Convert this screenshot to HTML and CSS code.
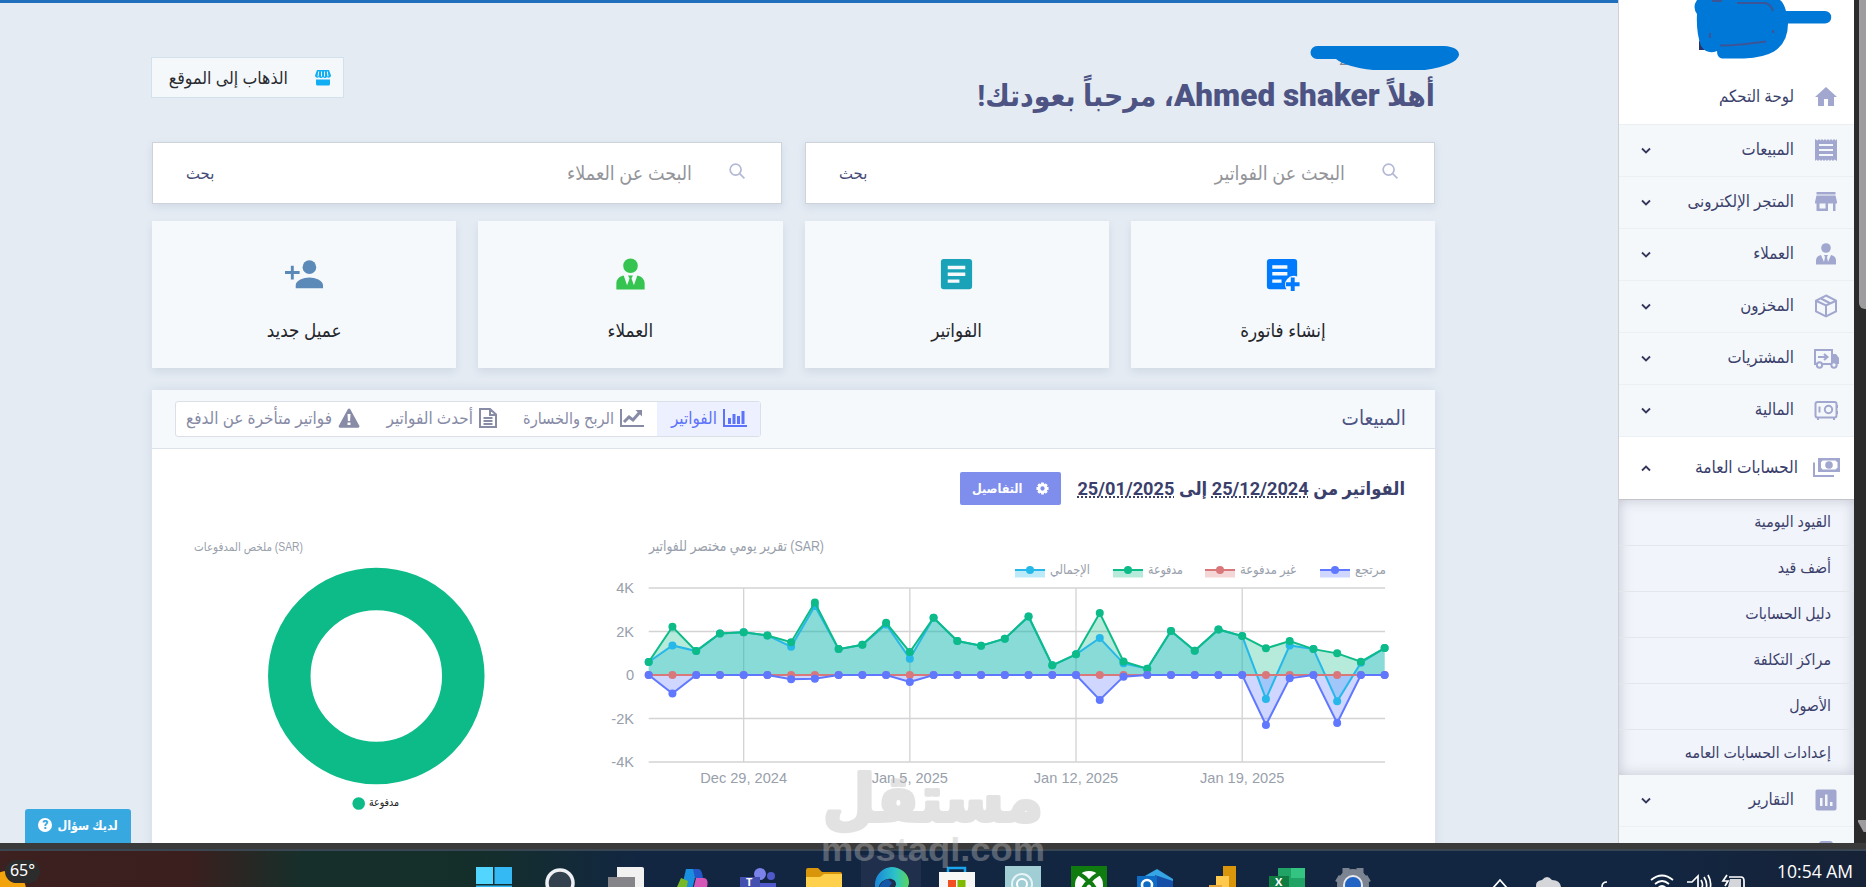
FILE: index.html
```html
<!DOCTYPE html>
<html lang="ar">
<head>
  <meta charset="UTF-8" />
  <meta name="viewport" content="width=device-width, initial-scale=1.0"/>
  <title>لوحة التحكم</title>
  <link rel="stylesheet" href="styles.css">
</head>
<body>

  <div class="window" dir="rtl">
    <div class="scrollbar"><span class="thumb"></span><span class="arrow"></span></div>

    <!-- Sidebar -->
    <nav class="sidebar">
      <a class="item home">
        <svg class="icon" viewBox="0 0 24 24"><path d="M10 21v-7h4v7h6v-9h3L12 2 1 12h3v9z"/></svg>
        <span>لوحة التحكم</span>
      </a>
      <a class="item">
        <svg class="icon" viewBox="0 0 24 24"><path fill-rule="evenodd" d="M19 18H5v-2h14v2zm0-5H5v-2h14v2zm0-5H5V6h14v2zM1 23l1.500-1.500L4 23l1.500-1.500L7 23l1.500-1.500L10 23l1.500-1.500L13 23l1.500-1.500L16 23l1.500-1.500L19 23l1.500-1.500L23 23V1l-1.500 1.500L20 1l-1.500 1.500L17 1l-1.500 1.500L14 1l-1.500 1.500L11 1 9.500 2.500 8 1 6.500 2.500 5 1 3.500 2.500 1 1z"/></svg>
        <span>المبيعات</span>
        <svg class="chev" viewBox="0 0 12 8"><path d="M2 1.500l4 4 4-4"/></svg>
      </a>
      <a class="item">
        <svg class="icon" viewBox="0 0 24 24"><path fill-rule="evenodd" d="M2.500 2h19v2.500h-19zM21.500 5.500h-19L1 12v1.500h1.500V21H14v-7.500h5V21h2.500v-7.500H23V12zM11.500 18.500h-6v-5h6z"/></svg>
        <span>المتجر الإلكترونى</span>
        <svg class="chev" viewBox="0 0 12 8"><path d="M2 1.500l4 4 4-4"/></svg>
      </a>
      <a class="item">
        <svg class="icon" viewBox="0 0 24 24"><circle cx="12" cy="6" r="4.800"/><path d="M2 22.500v-4c0-3 2-5 5-5.500L10 20l1-5-1-2h4l-1 2 1 5 3-7c3 .5 5 2.500 5 5.500v4z"/></svg>
        <span>العملاء</span>
        <svg class="chev" viewBox="0 0 12 8"><path d="M2 1.500l4 4 4-4"/></svg>
      </a>
      <a class="item">
        <svg class="icon line" viewBox="0 0 24 24"><path d="M12 1.500l10 5v11l-10 5-10-5v-11zM2.500 7L12 11.500 21.500 7M12 11.500V22M7 4.500l9.500 5"/></svg>
        <span>المخزون</span>
        <svg class="chev" viewBox="0 0 12 8"><path d="M2 1.500l4 4 4-4"/></svg>
      </a>
      <a class="item">
        <svg class="icon wide line" viewBox="0 0 27 24"><path d="M4 18H2V4h17v14H9M5 11h8M11 8l3.500 3L11 14M19 18h1"/><path class="solid" d="M19 8h4l3 4v6h-7z"/><circle class="hole" cx="6.500" cy="19" r="2.700"/><circle class="hole" cx="21" cy="19" r="2.700"/></svg>
        <span>المشتريات</span>
        <svg class="chev" viewBox="0 0 12 8"><path d="M2 1.500l4 4 4-4"/></svg>
      </a>
      <a class="item">
        <svg class="icon line" viewBox="0 0 24 24"><rect x="1.500" y="4" width="21" height="15.500" rx="2"/><circle cx="14.500" cy="11.500" r="3.700"/><path d="M5.500 8.500v6M4 20v2M20 20v2M23.500 7v3M23.500 13v3"/></svg>
        <span>المالية</span>
        <svg class="chev" viewBox="0 0 12 8"><path d="M2 1.500l4 4 4-4"/></svg>
      </a>
      <a class="item open">
        <svg class="icon wide" viewBox="0 0 27 24"><path fill-rule="evenodd" d="M5 3h22v14H5zM9.500 5.500A3 3 0 0 1 8 7v6a3 3 0 0 1 1.500 1.500h13A3 3 0 0 1 24.500 13V7a3 3 0 0 1-2-1.500z"/><circle cx="16" cy="10" r="3.800"/><path d="M0 7.500h2V20h19v2H0z"/></svg>
        <span>الحسابات العامة</span>
        <svg class="chev" viewBox="0 0 12 8"><path d="M2 6.500l4-4 4 4"/></svg>
      </a>
      <div class="submenu">
        <a>القيود اليومية</a>
        <a>أضف قيد</a>
        <a>دليل الحسابات</a>
        <a>مراكز التكلفة</a>
        <a>الأصول</a>
        <a>إعدادات الحسابات العامه</a>
      </div>
      <a class="item">
        <svg class="icon" viewBox="0 0 24 24"><path fill-rule="evenodd" d="M3.500 1.500h17a2 2 0 0 1 2 2v17a2 2 0 0 1-2 2h-17a2 2 0 0 1-2-2v-17a2 2 0 0 1 2-2zM6 10v8h2.500v-8zM11 6.500V18h2.500V6.500zM16 14v4h2.500v-4z"/></svg>
        <span>التقارير</span>
        <svg class="chev" viewBox="0 0 12 8"><path d="M2 1.500l4 4 4-4"/></svg>
      </a>
      <a class="item">
        <svg class="icon" viewBox="0 0 24 24"><rect x="5" y="1" width="14" height="20" rx="3"/></svg>
      </a>
    </nav>

    <!-- Main content -->
    <main class="main">
      <header class="header">
        <div class="welcome">
          <small>2024</small>
          <h1>أهلاً <b>Ahmed shaker</b>، مرحباً بعودتك!</h1>
        </div>
        <a class="site-btn">
          <svg viewBox="0 0 18 18"><path d="M3 1h12l2 5.500a2.300 2.300 0 0 1-4 1.500 2.500 2.500 0 0 1-4 0 2.500 2.500 0 0 1-4 0 2.300 2.300 0 0 1-4-1.500zM2 10.500h14V15a1.500 1.500 0 0 1-1.500 1.500h-11A1.500 1.500 0 0 1 2 15z"/><path class="slits" d="M4.700 2.500l-.7 5M7.500 2.500v5M10.500 2.500v5M13.300 2.500l.7 5"/></svg>
          <span>الذهاب إلى الموقع</span>
        </a>
      </header>

      <div class="searches">
        <div class="search">
          <svg viewBox="0 0 18 18"><circle cx="7" cy="7" r="5.800"/><path d="M11.300 11.300l5 5"/></svg>
          <span class="placeholder">البحث عن الفواتير</span>
          <span class="go">بحث</span>
        </div>
        <div class="search">
          <svg viewBox="0 0 18 18"><circle cx="7" cy="7" r="5.800"/><path d="M11.300 11.300l5 5"/></svg>
          <span class="placeholder">البحث عن العملاء</span>
          <span class="go">بحث</span>
        </div>
      </div>

      <div class="cards">
        <a class="card blue">
          <svg viewBox="0 0 40 40"><path fill-rule="evenodd" d="M7 4h25a3 3 0 0 1 3 3v15a9 9 0 0 0-11 13H7a3 3 0 0 1-3-3V7a3 3 0 0 1 3-3zM9.500 10.500V14H25v-3.500zM9.500 17.500V21H25v-3.500zM9.500 25v3.500H19V25z"/><path d="M28.500 23h4v5h5v4h-5v5h-4v-5h-5v-4h5z"/></svg>
          <span>إنشاء فاتورة</span>
        </a>
        <a class="card teal">
          <svg viewBox="0 0 40 40"><path fill-rule="evenodd" d="M7 4h26a3 3 0 0 1 3 3v25a3 3 0 0 1-3 3H7a3 3 0 0 1-3-3V7a3 3 0 0 1 3-3zM11 11v3.500h18V11zM11 18v3.500h18V18zM11 25v3.500h12V25z"/></svg>
          <span>الفواتير</span>
        </a>
        <a class="card green">
          <svg viewBox="0 0 40 40"><circle cx="20" cy="11" r="7.500"/><path d="M5.500 35.500V29c0-4 3-7 7.500-8l3.500 10L19 24l-1.500-3h5L21 24l2.500 7L27 21c4.500 1 7.500 4 7.500 8v6.500z"/></svg>
          <span>العملاء</span>
        </a>
        <a class="card steel">
          <svg viewBox="0 0 40 40"><circle cx="25" cy="12.500" r="7"/><path d="M11 34v-3c0-5 8-8 14-8s14 3 14 8v3zM6 11h3v5.500h6v3H9V25H6v-5.500H0v-3h6z"/></svg>
          <span>عميل جديد</span>
        </a>
      </div>

      <section class="panel">
        <div class="panel-head">
          <h2>المبيعات</h2>
          <div class="tabs">
            <a class="tab active">
              <svg viewBox="0 0 24 20"><path class="stroke" d="M1 1v17h23"/><path d="M5 10h3v6H5zM9.500 6h3v10h-3zM14 8h3v8h-3zM18.500 3h3v13h-3z"/></svg>
              <span>الفواتير</span>
            </a>
            <a class="tab profit">
              <svg viewBox="0 0 24 20"><path class="stroke" d="M1 1v17h23"/><path class="stroke thick" d="M4 14l5-5 4 3 7-8"/><path d="M15.500 2H22v6.500z"/></svg>
              <span>الربح والخسارة</span>
            </a>
            <a class="tab latest">
              <svg class="doc" viewBox="0 0 18 20"><path class="stroke" d="M1 1h10l6 5.500V19H1zM11 1v6h6M4.500 10h9M4.500 13h9M4.500 16h9"/></svg>
              <span>أحدث الفواتير</span>
            </a>
            <a class="tab late">
              <svg class="warn" viewBox="0 0 22 20"><path fill-rule="evenodd" d="M11 .5a1.500 1.500 0 0 1 1.300.8l9 16.500a1.300 1.300 0 0 1-1.200 1.900H2a1.300 1.300 0 0 1-1.200-1.900l9-16.500A1.500 1.500 0 0 1 11 .5zM9.500 6l.4 7h2.200l.4-7zM9.500 14.500V17h3v-2.500z"/></svg>
              <span>فواتير متأخرة عن الدفع</span>
            </a>
          </div>
        </div>

        <div class="range">
          <h3>الفواتير من <u>25/12/2024</u> إلى <u>25/01/2025</u></h3>
          <a class="details">
            <svg viewBox="0 0 14 14"><circle cx="7" cy="7" r="3.800"/><path d="M7 .5v2.500M7 11v2.500M.5 7H3M11 7h2.500M2.400 2.400l1.800 1.800M9.800 9.800l1.800 1.800M2.400 11.600l1.800-1.800M9.800 4.200l1.800-1.800"/></svg>
            <span>التفاصيل</span>
          </a>
        </div>

        <div class="charts">
          <svg id="line-chart" width="800" height="270" viewBox="605 530 800 270">
            <text class="chart-title" x="649" y="551" textLength="175" lengthAdjust="spacingAndGlyphs">تقرير يومي مختصر للفواتير (SAR)</text>
          </svg>
          <svg id="donut" width="400" height="300" viewBox="180 530 400 300">
            <text class="chart-title small" x="194" y="551" textLength="109" lengthAdjust="spacingAndGlyphs">ملخص المدفوعات (SAR)</text>
            <circle class="ring" cx="376.300" cy="676" r="87"/>
            <circle class="dot" cx="358.700" cy="803.500" r="6.300"/>
            <text class="donut-label" x="369" y="806" textLength="30" lengthAdjust="spacingAndGlyphs">مدفوعة</text>
          </svg>
        </div>
      </section>

      <a class="help">
        <span>لديك سؤال</span><b>?</b>
      </a>
    </main>
  </div>

  <!-- Taskbar -->
  <footer class="taskbar">
    <div class="weather"><i></i><span>65°</span></div>
    <div class="apps">
      <svg viewBox="0 0 36 36"><path fill="#52d6ff" d="M0 0h17v17H0z"/><path fill="#35b9f5" d="M18.500 0H36v17H18.500zM0 18.500h36V36H0z"/></svg>
      <svg viewBox="0 0 36 36"><circle cx="18" cy="16" r="13" fill="#33414f" stroke="#eef0f3" stroke-width="3.500"/></svg>
      <svg viewBox="0 0 36 36"><path fill="#f1f1f1" d="M9 0h25a2 2 0 0 1 2 2v26H9z"/><path fill="#858489" d="M0 10h27v22H0z"/></svg>
      <svg viewBox="0 0 36 36"><path fill="#1a8fe0" d="M12 2h11l-7 30H5z"/><path fill="#78b928" d="M3 20l4-9 7 3-4 18H1z"/><path fill="#2356c8" d="M19 2h5c3 0 4 3 5 9h-8z"/><path fill="#d457b8" d="M22 11h8q5 1 3 9l-4 11H17z"/></svg>
      <svg viewBox="0 0 36 36"><circle cx="20" cy="7" r="6" fill="#7b83eb"/><circle cx="31" cy="9" r="4" fill="#5059c9"/><path fill="#5059c9" d="M10 16h26v20H10z"/><path fill="#4450b0" d="M0 10h20v20H0z"/><text x="6" y="19" fill="#fff" class="letter">T</text></svg>
      <svg viewBox="0 0 36 36"><path fill="#d9960b" d="M0 3a2 2 0 0 1 2-2h10l4 4h18a2 2 0 0 1 2 2v10H0z"/><path fill="#ffd04c" d="M0 10h14l4-3h18v28H0z"/></svg>
      <svg class="current" viewBox="0 0 36 36"><defs><linearGradient id="edge"><stop offset="0" stop-color="#1a86d9"/><stop offset=".6" stop-color="#2cc3c8"/><stop offset="1" stop-color="#5bd65b"/></linearGradient></defs><path fill="url(#edge)" d="M18 0c10 0 18 7 18 15 0 6-4 9-9 9-4 0-6-2-5-4 3-4-1-9-7-8-7 1-11 7-10 16A18 18 0 0 1 18 0z"/><path fill="#1557a8" d="M15 12C6 15 3 24 8 32l12 4c-6-7-8-12-1-20z"/></svg>
      <svg viewBox="0 0 36 36"><path fill="none" stroke="#1aa5ee" stroke-width="2.500" d="M9 6V1h17v5"/><path fill="#f6f6f6" d="M0 5h36v31H0z"/><path fill="#f25022" d="M9 13h8v8H9z"/><path fill="#7fba00" d="M18.500 13h8v8h-8z"/></svg>
      <svg viewBox="0 0 36 36"><path fill="#a1cdd5" d="M0-1h36v37H0z"/><circle cx="17" cy="17" r="10" fill="none" stroke="#e6f4f6" stroke-width="2"/><circle cx="17" cy="17" r="5" fill="none" stroke="#fff" stroke-width="2"/></svg>
      <svg viewBox="0 0 36 36"><path fill="#107c10" d="M0-1h36v37H0z"/><circle cx="18" cy="18" r="14" fill="#fff"/><path fill="none" stroke="#107c10" stroke-width="4" d="M7 6q7 4 11 9 4-5 11-9M18 14q-8 7-9 18M18 14q8 7 9 18"/></svg>
      <svg viewBox="0 0 36 36"><path fill="#35a5e6" d="M6 10L20 2l16 10v22H6z"/><path fill="#164fa8" d="M18 8l18 6v20H18z"/><path fill="#0f6cc4" d="M0 9h20v20H0z"/><circle cx="10" cy="18" r="5" fill="none" stroke="#fff" stroke-width="2.500"/></svg>
      <svg viewBox="0 0 36 36"><path fill="#d9960b" d="M20-1h13v37H20z"/><path fill="#ffc94d" d="M13 9h13v27H13z"/><path fill="#e8a73c" d="M6 18h13v18H6z"/></svg>
      <svg viewBox="0 0 36 36"><path fill="#21a366" d="M9 1h27v33H9z"/><path fill="#33c481" d="M22 1h14v10H22z"/><path fill="#107c41" d="M0 9h20v20H0z"/><text x="6" y="19" fill="#fff" class="letter">X</text></svg>
      <svg viewBox="0 0 36 36"><circle cx="18" cy="18" r="12.500" fill="#2264c4" stroke="#7b8490" stroke-width="7"/><path d="M11 1v6M25 1v6M2 11l5 3M34 11l-5 3" stroke="#7b8490" stroke-width="7"/><circle cx="18" cy="18" r="9" fill="#2264c4" stroke="#e9e9ed" stroke-width="2"/></svg>
    </div>
    <div class="tray">
      <svg width="250" height="20" viewBox="1490 868 250 20"><path d="M1493 889l7-8 7 8"/><path class="cloud" d="M1536 888q-1-6 6-7 5-6 10 0 8 0 9 7z"/><path d="M1607 883q-5 0-5 5"/><path d="M1651 881q11-9 22 0M1655 885q7-6 14 0M1658 889q4-4 8 0"/><path d="M1687 883h5l6-6v14M1701 881q3 5 0 9M1704 878q4 6 2 12M1708 876q4 7 2 14"/><path class="cloud" d="M1730 880h11v8h-13z"/><path d="M1727 876l-4 6h5l-3 5M1729 878h12q3 0 3 4v6"/></svg>
      <time>10:54 AM</time>
    </div>
  </footer>

  <!-- Marker strokes and watermark lie over the whole screen -->
  <svg class="overlay" viewBox="0 0 1866 887">
    <path fill="#2b3468" d="M1699 40v10h6z"/>
    <path fill="#0078d8" d="M1697 0q-5 7 0 14-1 18 4 32 6 9 16 5 0 7 5 7.500h22q20-1 30-7 14-9 14-28h37a6 6 0 0 0 0-12.500h-39q-2-8-6-11z"/>
    <path class="scrap" d="M1720 45.500q12 0 21-1t25-3M1710 33v5M1773 30v3M1773 11q-2-7-8-8h-28M1712 1h10"/>
    <path fill="#0078d8" d="M1317 46h127q15 1 15 9-2 10-34 15h-52q-27-3-37-11h-19a6.500 6.500 0 0 1 0-13z"/>
    <g class="watermark">
      <text class="wm-ar" x="823" y="821" textLength="220" lengthAdjust="spacingAndGlyphs">مستقل</text>
      <text class="wm-en" x="821" y="861" textLength="224" lengthAdjust="spacingAndGlyphs">mostaql.com</text>
    </g>
  </svg>

  <script src="chart.js"></script>
</body>
</html>
```

FILE: styles.css
```css
* {
  box-sizing: border-box;
  margin: 0;
  padding: 0;
}

body {
  width: 1866px;
  height: 887px;
  overflow: hidden;
  position: relative;
  background: #3a3a3a;
  font-family: Roboto, "DejaVu Sans Condensed", "DejaVu Sans", sans-serif;
  color: #3b3f6b;
}

.window {
  display: flex;
  height: 843px;
  overflow: hidden;
}

.scrollbar {
  width: 12px;
  background: #2b2b2b;
  display: flex;
  flex-direction: column;
  justify-content: space-between;
  align-items: flex-end;
}

.thumb {
  width: 7px;
  height: 309px;
  background: #9f9c9f;
  border-radius: 0 0 0 6px;
  align-self: flex-start;
}

.arrow {
  width: 8px;
  height: 12px;
  margin-bottom: 11px;
  background: #9f9c9f;
  align-self: flex-start;
  clip-path: polygon(100% 0, 100% 100%, 70% 100%, 0 15%, 0 0);
}

/* Sidebar */
.sidebar {
  width: 236px;
  border-left: 1px solid #cfd1d5;
  background: #f4f8fb;
  flex: none;
}

.item {
  display: flex;
  align-items: center;
  height: 52px;
  padding: 0 16px 0 21px;
  border-bottom: 1px solid #edf0f2;
  font-size: 16.7px;
}

.item span {
  margin-bottom: 3px;
}

.item.home {
  height: 125px;
  padding-top: 71px;
  background: #fff;
}

.item.open {
  height: 63px;
  background: #fff;
  border-bottom: 1px solid #c5c3ca;
  font-size: 17.2px;
}

.icon {
  width: 24px;
  height: 24px;
  margin-left: 20px;
  margin-bottom: 2px;
  fill: #a1a7ce;
  flex: none;
}

.icon.wide {
  width: 27px;
  margin-right: -2px;
  margin-left: 19px;
}

.item.open .icon {
  margin-left: 15px;
}

.icon.line {
  fill: none;
  stroke: #a1a7ce;
  stroke-width: 2;
}

.icon .solid {
  fill: #a1a7ce;
  stroke: none;
}

.icon .hole {
  fill: #f4f8fb;
}

.chev {
  width: 12px;
  height: 8px;
  margin-right: auto;
  fill: none;
  stroke: #34375b;
  stroke-width: 1.8;
}

.submenu {
  height: 275px;
  background: #f1f4fa;
  box-shadow: inset 0 0 13px rgba(60, 65, 90, 0.25);
}

.submenu a {
  display: flex;
  align-items: center;
  height: 46px;
  padding-right: 23px;
  padding-bottom: 2px;
  border-bottom: 1px solid #e3e6eb;
  font-size: 15.8px;
}

.submenu a:last-child {
  border-bottom: 0;
}

/* Main */
.main {
  flex: 1;
  position: relative;
  background: #e4ebf3;
  border-top: 3px solid #1f6fbd;
  padding: 0 183px 0 152px;
}

.header {
  display: flex;
  justify-content: space-between;
  height: 139px;
}

.welcome {
  padding-top: 47px;
}

.welcome small {
  display: block;
  height: 22px;
  padding-right: 60px;
  font-size: 16px;
  color: #858894;
}

.welcome h1 {
  font-size: 29.7px;
  line-height: 48px;
  color: #4d5382;
  white-space: nowrap;
}

.welcome h1 b {
  font-size: 31.5px;
}

.site-btn {
  display: flex;
  align-items: center;
  gap: 26px;
  width: 193px;
  height: 41px;
  margin-top: 54px;
  margin-left: -1px;
  padding-right: 11px;
  background: #f4f8fb;
  border: 1px solid #d2e2ec;
  font-size: 17.6px;
  font-weight: 300;
  color: #292b30;
  white-space: nowrap;
}

.site-btn svg {
  width: 18px;
  height: 18px;
  fill: #11aef4;
}

.slits {
  stroke: #f4f8fb;
  stroke-width: 1;
}

.searches {
  display: flex;
  gap: 23px;
}

.search {
  flex: 1;
  display: flex;
  align-items: center;
  height: 62px;
  padding: 0 35px 0 33px;
  background: #fff;
  border: 1px solid #ced3d9;
  box-shadow: 0 3px 8px rgba(70, 90, 130, 0.12);
}

.search svg {
  width: 17px;
  height: 17px;
  margin-left: 37px;
  margin-bottom: 3px;
  fill: none;
  stroke: #b3b9d5;
  stroke-width: 1.8;
}

.placeholder {
  font-size: 19.5px;
  font-weight: 300;
  color: #94959a;
}

.go {
  margin-right: auto;
  font-size: 16.5px;
  color: #454b78;
}

.cards {
  display: grid;
  grid-template-columns: repeat(4, 1fr);
  gap: 22px;
  margin-top: 17px;
}

.card {
  display: flex;
  flex-direction: column;
  align-items: center;
  height: 147px;
  padding-top: 34px;
  background: #f5f9fc;
  box-shadow: 0 4px 8px rgba(50, 70, 100, 0.1);
  color: #24262b;
  font-size: 18.7px;
  font-weight: 300;
}

.card svg {
  width: 39px;
  height: 39px;
  margin-bottom: 26px;
}

.blue svg { fill: #007bff; }
.teal svg { fill: #19a2b8; }
.green svg { fill: #34c44f; }
.steel svg { fill: #5c8ab8; }

/* Sales panel */
.panel {
  height: 480px;
  margin-top: 22px;
  background: #fff;
  box-shadow: 0 0 10px rgba(70, 90, 130, 0.12);
}

.panel-head {
  display: flex;
  justify-content: space-between;
  align-items: flex-start;
  height: 59px;
  padding: 11px 29px 0 23px;
  background: #f5f9fc;
  border-bottom: 1px solid #dde3ea;
}

.panel-head h2 {
  font-size: 20.5px;
  line-height: 35px;
  font-weight: normal;
  color: #4d5382;
}

.tabs {
  display: flex;
  width: 586px;
  height: 36px;
  background: #fff;
  border: 1px solid #dbe0e8;
  border-radius: 3px;
}

.tab {
  display: flex;
  align-items: center;
  gap: 6px;
  padding-right: 13px;
  padding-bottom: 2px;
  font-size: 17px;
  color: #878ba6;
  fill: #878ba6;
  white-space: nowrap;
}

.tab svg {
  width: 24px;
  height: 20px;
  flex: none;
}

.tab svg.doc { width: 18px; }
.tab svg.warn { width: 22px; }

.tab .stroke {
  fill: none;
  stroke: #878ba6;
  stroke-width: 2;
}

.tab .thick {
  stroke-width: 3;
}

.tab.active {
  width: 103px;
  background: #edf0ff;
  color: #5c72fa;
  fill: #5c72fa;
}

.tab.active .stroke {
  stroke: #5c72fa;
}

.tab.profit {
  width: 147px;
  font-size: 16.2px;
}

.tab.latest { width: 137px; }

.range {
  display: flex;
  align-items: center;
  gap: 16px;
  height: 81px;
  padding: 0 30px 3px 0;
}

.range h3 {
  font-size: 18.2px;
  color: #3b3f6b;
  white-space: nowrap;
}

.range u {
  text-decoration: underline dotted 2px;
  text-underline-offset: 2px;
}

.details {
  display: flex;
  align-items: center;
  gap: 14px;
  width: 101px;
  height: 33px;
  padding-right: 12px;
  border-radius: 2px;
  background: #7f8eec;
  color: #fff;
  font-size: 12.5px;
  font-weight: bold;
}

.details svg {
  width: 13px;
  height: 13px;
  fill: none;
  stroke: #fff;
  stroke-width: 3;
}

.charts {
  display: flex;
  gap: 25px;
  padding-right: 30px;
}

.charts svg {
  direction: ltr;
  flex: none;
  font-family: "Liberation Sans", "DejaVu Sans", sans-serif;
}

.chart-title {
  font-size: 15px;
  fill: #98a0ab;
}

.chart-title.small {
  font-size: 12px;
}

.axis {
  font-size: 14.6px;
  fill: #98a0ab;
}

.legend {
  font-size: 13px;
  fill: #98a0ab;
}

.grid {
  stroke: #d3d3d5;
  stroke-width: 1.3;
}

.ring {
  fill: none;
  stroke: #0dbb88;
  stroke-width: 42.5;
}

.dot {
  fill: #0dbb88;
}

.donut-label {
  font-size: 11px;
  fill: #222;
}

.help {
  position: absolute;
  left: 25px;
  bottom: 0;
  display: flex;
  align-items: center;
  justify-content: center;
  gap: 5px;
  width: 106px;
  height: 34px;
  padding-bottom: 2px;
  border-radius: 3px 3px 0 0;
  background: #38a8e1;
  color: #fff;
  font-size: 12.5px;
  font-weight: bold;
}

.help b {
  width: 14px;
  height: 14px;
  border-radius: 50%;
  background: #fff;
  color: #38a8e1;
  font-size: 12px;
  line-height: 14px;
  text-align: center;
}

/* Taskbar */
.taskbar {
  display: flex;
  height: 38px;
  margin-top: 6px;
  border-top: 2px solid #3b4653;
  background: linear-gradient(90deg, #3d2020 0, #3a1f1e 190px, #172f2a 300px, #142f2b 480px, #122642 640px, #122642 1640px, #162236 1866px);
  overflow: hidden;
}

.weather {
  position: relative;
  width: 476px;
  padding: 9px 0 0 5px;
}

.weather i {
  position: absolute;
  left: -12px;
  top: 20px;
  width: 38px;
  height: 38px;
  border-radius: 50%;
  background: #f3a40c;
}

.weather span {
  position: relative;
  display: block;
  width: 35px;
  height: 23px;
  border-radius: 12px;
  background: #2c2c2c;
  color: #fff;
  font: 16px/20px "Noto Sans", sans-serif;
  text-align: center;
}

.apps {
  display: flex;
  gap: 30.1px;
  padding-top: 16px;
}

.apps svg {
  width: 36px;
  height: 36px;
  overflow: visible;
}

.apps .current {
  outline: 12px solid #20304c;
  background: #20304c;
}

.letter {
  font: bold 11px "Open Sans", sans-serif;
}

.tray {
  display: flex;
  margin-left: auto;
  padding-right: 13px;
}

.tray svg {
  margin: 16px 37px 0 0;
  fill: none;
  stroke: #fff;
  stroke-width: 1.7;
  overflow: visible;
}

.tray .cloud {
  fill: #d5d6da;
  stroke: none;
}

.tray time {
  padding-top: 8px;
  font: 17.5px/24px "Open Sans", sans-serif;
  color: #fff;
  white-space: nowrap;
}

.overlay {
  position: absolute;
  left: 0;
  top: 0;
  width: 1866px;
  height: 887px;
}

.scrap {
  fill: none;
  stroke: #3c5597;
  stroke-width: 2;
}

.watermark {
  fill: #b9b9b9;
  opacity: 0.4;
}

.wm-ar {
  font: bold 64px "DejaVu Sans", sans-serif;
  stroke: #b9b9b9;
  stroke-width: 4;
  stroke-linejoin: round;
}

.wm-en {
  font: bold 34px "Liberation Sans", sans-serif;
}
```

FILE: chart.js
```js
const svg = document.getElementById("line-chart");
const NS = "http://www.w3.org/2000/svg";

const left = 648.7, step = 23.74, zero = 675, unit = 43.5 / 2000;

const paid = [600, 2220, 1100, 1910, 1970, 1820, 1510, 3335, 1190, 1390, 2400, 1055, 2630, 1560, 1345, 1670,
  2690, 445, 950, 2845, 625, 290, 2020, 1115, 2095, 1790, 1225, 1560, 1190, 995, 610, 1240];

// the other series only differ on a few days
function patch(base, changes) {
  const out = base.slice();
  for (const i in changes) out[i] = changes[i];
  return out;
}
const none = paid.map(() => 0);
const total = patch(paid, {1: 1360, 6: 1300, 7: 3170, 10: 2325, 11: 750, 19: 1700, 20: 535, 26: -1100, 27: 1360, 29: -1210, 30: 565});
const returned = patch(none, {1: -855, 6: -200, 7: -170, 11: -320, 19: -1145, 20: -75, 26: -2295, 27: -155, 29: -2205});

function add(tag, attrs, text) {
  const el = document.createElementNS(NS, tag);
  for (const key in attrs) el.setAttribute(key, attrs[key]);
  if (text) el.textContent = text;
  svg.appendChild(el);
}

// Grid and axis labels
["4K", "2K", "0", "-2K", "-4K"].forEach((label, i) => {
  const y = 588 + i * 43.5;
  add("line", {class: "grid", x1: left, x2: 1385, y1: y, y2: y});
  add("text", {class: "axis", x: 634, y: y + 5, "text-anchor": "end"}, label);
});
["Dec 29, 2024", "Jan 5, 2025", "Jan 12, 2025", "Jan 19, 2025"].forEach((label, i) => {
  const x = left + (4 + i * 7) * step;
  add("line", {class: "grid", x1: x, x2: x, y1: 588, y2: 762});
  add("text", {class: "axis", x: x, y: 783, "text-anchor": "middle"}, label);
});

const series = [
  {data: total, color: "#26b8e8"},
  {data: paid, color: "#0dbb88"},
  {data: none, color: "#d9777b"},
  {data: returned, color: "#5f78ff"}
].map(s => ({
  ...s,
  points: s.data.map((v, i) => [left + i * step, zero - v * unit])
}));

// all areas go below all lines
series.forEach(({points, color}) => {
  const line = points.map(p => p.join(",")).join(" ");
  add("polygon", {points: `${left},${zero} ${line} ${left + 31 * step},${zero}`, fill: color, opacity: 0.3});
});
series.forEach(({points, color}) => {
  add("polyline", {points: points.map(p => p.join(",")).join(" "), fill: "none", stroke: color, "stroke-width": 2});
  points.forEach(p => add("circle", {cx: p[0], cy: p[1], r: 4, fill: color}));
});

// Legend: label, swatch x, text x, text width
[["الإجمالي", 1015, 1050, 40], ["مدفوعة", 1113, 1148, 35], ["غير مدفوعة", 1205, 1240, 56], ["مرتجع", 1320, 1355, 31]].forEach(([label, x, tx, w], i) => {
  const color = series[i].color;
  add("rect", {x: x, y: 570, width: 30, height: 7.5, fill: color, opacity: 0.3});
  add("line", {x1: x, x2: x + 30, y1: 570, y2: 570, stroke: color, "stroke-width": 2});
  add("circle", {cx: x + 15, cy: 570, r: 4, fill: color});
  add("text", {class: "legend", x: tx, y: 574, textLength: w, lengthAdjust: "spacingAndGlyphs"}, label);
});
```
